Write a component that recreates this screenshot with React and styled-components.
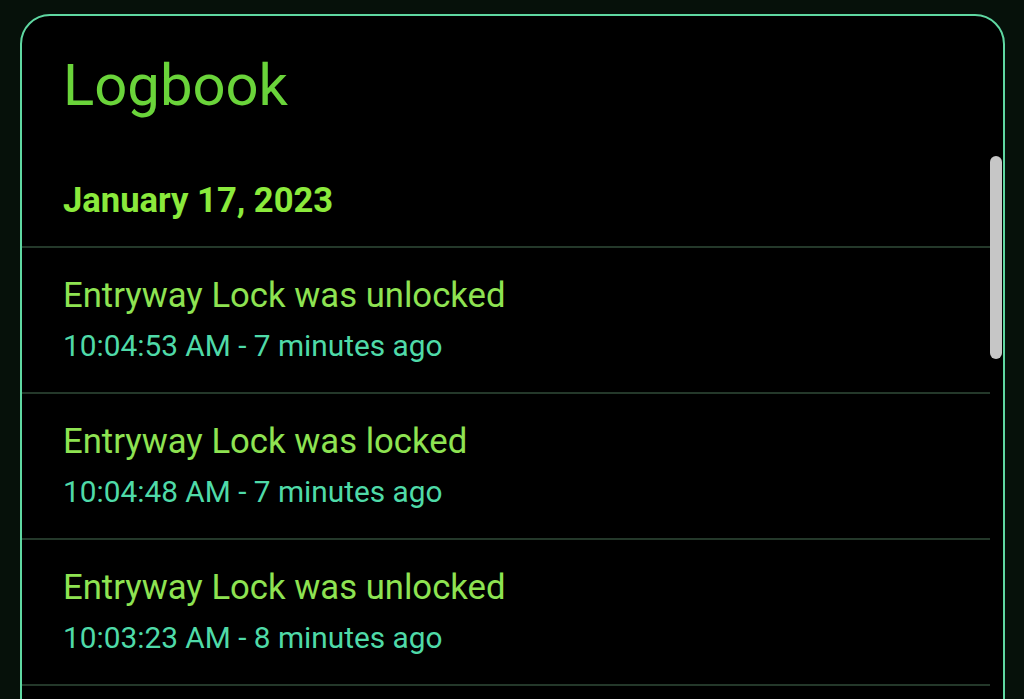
import React from "react";
import styled, { createGlobalStyle } from "styled-components";

const Global = createGlobalStyle`
  html, body {
    margin: 0;
    padding: 0;
    background: #06110a;
    overflow: hidden;
  }
  body {
    font-family: Roboto, "Noto Sans", "Liberation Sans", sans-serif;
  }
`;

const Page = styled.div`
  height: 699px;
  padding: 14px 19px 0 20px;
  box-sizing: border-box;
  overflow: hidden;
`;

const Card = styled.section`
  height: 820px;
  background: #000;
  border: 2px solid #5fd8a2;
  border-radius: 30px;
  display: flex;
  flex-direction: column;
  overflow: hidden;
`;

const Header = styled.h1`
  margin: 0;
  padding: 35px 0 30px 41px;
  font-size: 58px;
  line-height: 68px;
  font-weight: 400;
  color: #6ad43a;
`;

const ScrollArea = styled.div`
  flex: 1;
  display: flex;
  min-height: 0;
`;

const List = styled.div`
  flex: 1;
  display: flex;
  flex-direction: column;
`;

const DateRow = styled.div`
  padding: 31px 0 26px 41px;
  font-size: 34.6px;
  line-height: 40px;
  font-weight: 700;
  color: #8bea3c;
  border-bottom: 2px solid #24382a;
`;

const Entry = styled.div`
  padding: 27px 0 28px 41px;
  border-bottom: 2px solid #24382a;
  display: flex;
  flex-direction: column;
  gap: 13px;
`;

const EntryTitle = styled.div`
  font-size: 34.7px;
  line-height: 40px;
  color: #8ee352;
`;

const EntryTime = styled.div`
  font-size: 29.8px;
  line-height: 36px;
  color: #4fdaa8;
`;

const Track = styled.div`
  width: 12px;
  margin-right: 1px;
  display: flex;
  flex-direction: column;
`;

const Thumb = styled.div`
  margin-top: 7px;
  height: 203px;
  border-radius: 6px;
  background: #c6c6c6;
`;

const entries = [
  { title: "Entryway Lock was unlocked", time: "10:04:53 AM - 7 minutes ago" },
  { title: "Entryway Lock was locked", time: "10:04:48 AM - 7 minutes ago" },
  { title: "Entryway Lock was unlocked", time: "10:03:23 AM - 8 minutes ago" },
];

export default function App() {
  return (
    <>
      <Global />
      <Page>
        <Card>
          <Header>Logbook</Header>
          <ScrollArea>
            <List>
              <DateRow>January 17, 2023</DateRow>
              {entries.map((e, i) => (
                <Entry key={i}>
                  <EntryTitle>{e.title}</EntryTitle>
                  <EntryTime>{e.time}</EntryTime>
                </Entry>
              ))}
            </List>
            <Track>
              <Thumb />
            </Track>
          </ScrollArea>
        </Card>
      </Page>
    </>
  );
}
